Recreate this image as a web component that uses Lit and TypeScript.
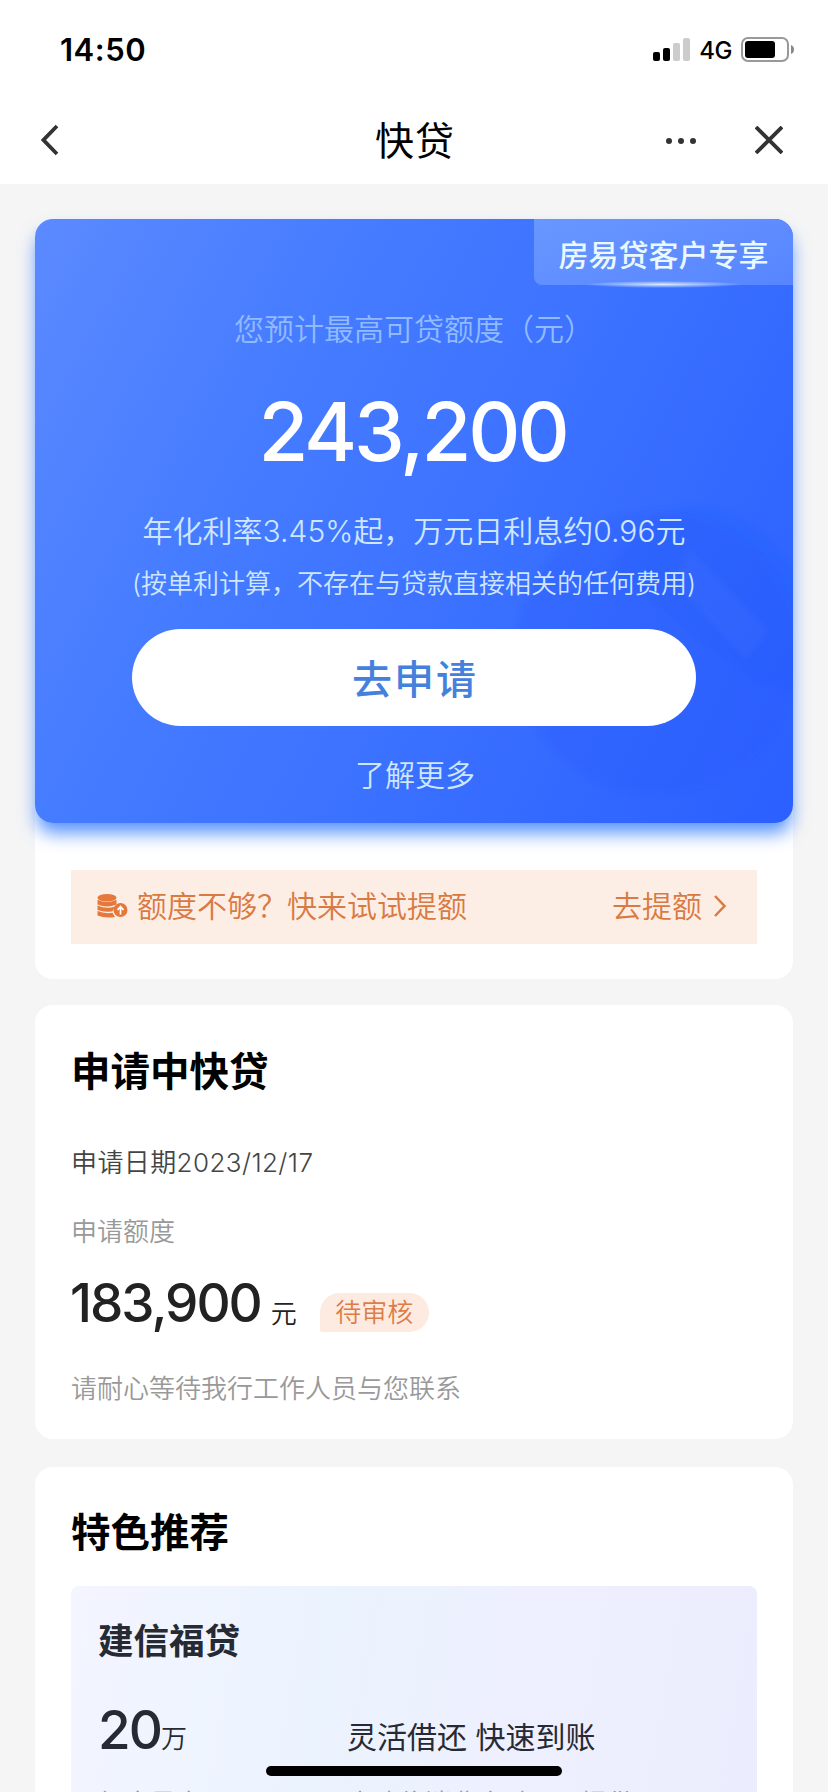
import { LitElement, html, css } from "lit";
import { customElement } from "lit/decorators.js";

@customElement("app-root")
export class AppRoot extends LitElement {
  static styles = css`
    :host { display: block; width: 828px; height: 1792px; overflow: hidden; position: relative; background: #f5f5f5; color: #000; font-family: Inter, "Noto Sans CJK SC", sans-serif; line-height: 1; }
    * { box-sizing: border-box; }
    svg { display: block; }
    .top { background: #fff; height: 184px; }
    .status { height: 98px; padding: 1px 34px 0 60px; display: flex; align-items: center; justify-content: space-between; }
    .time { font-size: 31px; font-weight: 600; letter-spacing: 0.5px; }
    .signals { display: flex; align-items: center; gap: 9px; }
    .net { font-size: 24px; font-weight: 500; letter-spacing: -0.5px; padding-top: 2px; }
    .nav { height: 86px; padding: 0 45px 2px 41px; display: grid; grid-template-columns: 1fr auto 1fr; align-items: center; }
    .title { font-size: 39px; letter-spacing: 1px; padding-left: 3px; margin-right: -3px; }
    .acts { display: flex; justify-content: flex-end; align-items: center; gap: 59px; }
    main { padding: 35px 35px 0; display: flex; flex-direction: column; }
    .card { background: #fff; border-radius: 18px; }
    .offer { height: 760px; margin-bottom: 26px; }
    .hero { position: relative; height: 604px; border-radius: 18px; background: linear-gradient(118deg, #5c8aff 0%, #467cff 30%, #3a70ff 62%, #2b5fff 100%); box-shadow: 0 12px 18px -2px rgba(45, 120, 255, .8); display: flex; flex-direction: column; align-items: center; color: #cfe6ff; }
    .art { position: absolute; inset: 0; }
    .badge { position: absolute; top: 0; right: 0; width: 259px; height: 66px; border-radius: 0 18px 0 8px; background: linear-gradient(160deg, #6997ff, #5785ff); display: flex; align-items: center; justify-content: center; font-size: 30px; font-weight: 500; color: #eaf8ff; padding-top: 5px; }
    .badge::after { content: ""; position: absolute; left: 50px; right: 50px; bottom: -3px; height: 7px; background: radial-gradient(closest-side, rgba(225, 240, 255, .95), rgba(160, 195, 255, 0)); }
    .row { position: relative; display: flex; align-items: center; justify-content: center; white-space: nowrap; }
    .cap { margin-top: 90px; height: 40px; font-size: 30px; font-weight: 350; color: #92bbff; }
    .sum { margin-top: 41px; height: 84px; font-size: 81px; font-weight: 500; color: #fff; letter-spacing: -3.1px; padding-right: 3px; }
    .rate { margin-top: 37px; height: 40px; font-size: 30px; font-weight: 350; }
    .hint { margin-top: 15px; height: 36px; font-size: 26px; font-weight: 350; }
    .apply { margin-top: 27px; width: 564px; height: 97px; border-radius: 49px; background: #fff; font-size: 40px; font-weight: 500; letter-spacing: 2px; color: #4481dd; padding: 4px 0 0 2px; }
    .more { margin-top: 29px; height: 40px; font-size: 30px; font-weight: 350; padding-left: 2px; }
    .raise { margin: 47px 36px 0; height: 74px; background: #fdeee5; color: #d97a43; display: flex; align-items: center; padding: 0 30px 2px 26px; font-size: 30px; font-weight: 350; }
    .ask { margin-left: 9px; flex: 1; }
    .go { margin-right: 11px; }
    .pending { height: 434px; padding: 48px 36px 0; margin-bottom: 28px; }
    h2 { margin: 0; font-size: 39.5px; font-weight: 700; height: 40px; display: flex; align-items: center; }
    .date { margin-top: 52px; height: 36px; font-size: 26px; font-weight: 350; letter-spacing: 0.4px; color: #444; display: flex; align-items: center; }
    .lab { margin-top: 33px; height: 36px; font-size: 26px; font-weight: 350; color: #999; display: flex; align-items: center; }
    .amt { margin-top: 26px; height: 55px; display: flex; align-items: flex-end; color: #222; }
    .num { font-size: 53px; font-weight: 500; letter-spacing: -2px; line-height: 55px; }
    .amt .num { margin-left: -1px; }
    .unit { font-size: 26px; font-weight: 350; margin: 0 0 4px 10px; }
    .tag { margin: 0 0 -1px 23px; width: 109px; height: 39px; border-radius: 22px 22px 22px 2px; background: #fdebe2; color: #df7c46; font-size: 26px; font-weight: 350; display: flex; align-items: center; justify-content: center; }
    .note { margin-top: 40px; height: 36px; font-size: 26px; font-weight: 350; color: #999; display: flex; align-items: center; }
    .picks { height: 420px; padding: 47px 36px 0; }
    .pick { margin-top: 32px; height: 320px; border-radius: 8px; background: linear-gradient(100deg, #f3f5ff 0%, #ebf3fe 38%, #eef0ff 60%, #ebecfd 100%); padding: 38px 27px 0; color: #262a33; }
    .name { font-size: 35.5px; font-weight: 700; height: 36px; display: flex; align-items: center; }
    .facts { margin-top: 37px; display: grid; grid-template-columns: 249px 1fr; row-gap: 34px; }
    .f1 { height: 60px; display: flex; align-items: flex-end; }
    .f1 .num { line-height: 53px; }
    .wan { font-size: 26px; font-weight: 350; margin: 0 0 5px 0; }
    .flex { font-size: 30px; padding-bottom: 5px; }
    .sub { font-size: 26px; font-weight: 350; color: #8e93a0; white-space: nowrap; }
    .home { position: absolute; left: 266px; top: 1766px; width: 296px; height: 10px; border-radius: 5px; background: #000; }
  `;

  render() {
    return html`
      <div class="top">
        <div class="status">
          <span class="time">14:50</span>
          <div class="signals">
            <svg width="37" height="24" viewBox="0 0 37 24">
              <rect x="0" y="14" width="7" height="9" rx="2" />
              <rect x="10" y="10" width="7" height="13" rx="2" />
              <rect x="20" y="5" width="7" height="18" rx="2" fill="#ccc" />
              <rect x="30" y="0" width="7" height="23" rx="2" fill="#ccc" />
            </svg>
            <span class="net">4G</span>
            <svg width="53" height="25" viewBox="0 0 53 25">
              <rect x="1" y="1" width="46" height="23" rx="6" fill="none" stroke="#999" stroke-width="2" />
              <rect x="4" y="4" width="30" height="17" rx="3" />
              <path d="M50 8q3 1 3 4.500t-3 4.500z" fill="#888" />
            </svg>
          </div>
        </div>
        <div class="nav">
          <svg width="18" height="32" viewBox="0 0 18 32"><path d="M16 2 2.500 16 16 30" fill="none" stroke="#333" stroke-width="3.800" /></svg>
          <span class="title">快贷</span>
          <div class="acts">
            <svg width="30" height="8" viewBox="0 0 30 8" fill="#333"><circle cx="3" cy="5" r="3" /><circle cx="15" cy="5" r="3" /><circle cx="27" cy="5" r="3" /></svg>
            <svg width="28" height="28" viewBox="0 0 28 28"><path d="m1 1 26 26M27 1 1 27" stroke="#333" stroke-width="3.800" /></svg>
          </div>
        </div>
      </div>
      <main>
        <section class="card offer">
          <div class="hero">
            <svg class="art" width="758" height="604" viewBox="0 0 758 604">
              <defs>
                <filter id="soft"><feGaussianBlur stdDeviation="3" /></filter>
                <clipPath id="edge"><rect width="758" height="604" rx="18" /></clipPath>
              </defs>
              <g clip-path="url(#edge)"><g filter="url(#soft)">
                <circle cx="622" cy="434" r="142" fill="#1f52fa" opacity=".22" />
                <path d="M575 350q70-110 160-30l40 50v110l-60-20z" fill="#1f52fa" opacity=".13" />
                <path d="m655 330 78 82-22 28-72-76z" fill="#5a88ff" opacity=".12" />
              </g></g>
            </svg>
            <div class="badge">房易贷客户专享</div>
            <div class="row cap">您预计最高可贷额度（元）</div>
            <div class="row sum">243,200</div>
            <div class="row rate">年化利率3.45%起，万元日利息约0.96元</div>
            <div class="row hint">(按单利计算，不存在与贷款直接相关的任何费用)</div>
            <div class="row apply">去申请</div>
            <div class="row more">了解更多</div>
          </div>
          <div class="raise">
            <svg width="31" height="24" viewBox="0 0 31 24">
              <g fill="#e5793c">
                <ellipse cx="10" cy="3.800" rx="9.500" ry="3.800" />
                <path d="M.5 5.800q9.500 4.500 19 0v4.600q-9.500 4-19 0zM.5 11.400q9 4 17.500 1l-2.500 4.900q-8 1.500-15-1.200zM.5 17q7 3 15 1.800l2.500 4.200q-10 1.500-17.500-1.500z" />
                <circle cx="23.500" cy="16" r="7" />
              </g>
              <path d="M23.500 20.500v-7m-3 2.500 3-3.500 3 3.500" fill="none" stroke="#fff" stroke-width="1.700" />
            </svg>
            <span class="ask">额度不够？快来试试提额</span>
            <span class="go">去提额</span>
            <svg width="14" height="24" viewBox="0 0 14 24"><path d="m2 2 9.500 10L2 22" fill="none" stroke="#d97a43" stroke-width="2.500" /></svg>
          </div>
        </section>
        <section class="card pending">
          <h2>申请中快贷</h2>
          <div class="date">申请日期2023/12/17</div>
          <div class="lab">申请额度</div>
          <div class="amt"><span class="num">183,900</span><span class="unit">元</span><span class="tag">待审核</span></div>
          <div class="note">请耐心等待我行工作人员与您联系</div>
        </section>
        <section class="card picks">
          <h2>特色推荐</h2>
          <div class="pick">
            <div class="name">建信福贷</div>
            <div class="facts">
              <div class="f1"><span class="num">20</span><span class="wan">万</span></div>
              <div class="f1 flex">灵活借还 快速到账</div>
              <div class="sub">额度最高</div>
              <div class="sub">由建信消费金融公司提供</div>
            </div>
          </div>
        </section>
      </main>
      <div class="home"></div>
    `;
  }
}
